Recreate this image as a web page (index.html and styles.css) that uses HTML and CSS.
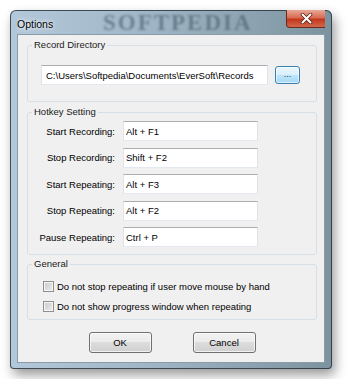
FILE: index.html
```html
<!DOCTYPE html>
<html lang="en">
<head>
    <meta charset="UTF-8">
    <title>Options</title>
    <link rel="stylesheet" href="styles.css">
</head>
<body>

  <div class="window">
    <div class="titlebar">
      <span class="title">Options</span>
      <span class="watermark">SOFTPEDIA</span>
      <span class="close">
        <svg width="13" height="11" viewBox="0 0 13 11">
          <path d="M2.5 1.5 L10.5 9.5 M10.5 1.5 L2.5 9.5" stroke="#5a2418" stroke-width="3.6" stroke-linecap="round"/>
          <path d="M2.5 1.5 L10.5 9.5 M10.5 1.5 L2.5 9.5" stroke="#ffffff" stroke-width="2" stroke-linecap="round"/>
        </svg>
      </span>
    </div>

    <div class="client">
      <fieldset class="group">
        <legend>Record Directory</legend>
        <div class="dir-body">
          <div class="textbox dir">C:\Users\Softpedia\Documents\EverSoft\Records</div>
          <button type="button" class="browse">...</button>
        </div>
      </fieldset>

      <fieldset class="group">
        <legend>Hotkey Setting</legend>
        <div class="hotkey-body">
          <label>Start Recording:</label>
          <div class="textbox">Alt + F1</div>
          <label>Stop Recording:</label>
          <div class="textbox">Shift + F2</div>
          <label>Start Repeating:</label>
          <div class="textbox">Alt + F3</div>
          <label>Stop Repeating:</label>
          <div class="textbox">Alt + F2</div>
          <label>Pause Repeating:</label>
          <div class="textbox">Ctrl + P</div>
        </div>
      </fieldset>

      <fieldset class="group">
        <legend>General</legend>
        <div class="general-body">
          <div class="check-row"><span class="check"></span>Do not stop repeating if user move mouse by hand</div>
          <div class="check-row"><span class="check"></span>Do not show progress window when repeating</div>
        </div>
      </fieldset>

      <div class="actions">
        <button type="button" class="btn">OK</button>
        <button type="button" class="btn">Cancel</button>
      </div>
    </div>
  </div>

</body>
</html>
```

FILE: styles.css
```css
body {
    margin: 0;
    padding: 10px;
    background: #ffffff;
    font-family: "Liberation Sans", Arial, sans-serif;
    font-size: 9.5px;
    color: #000000;
}

.window {
    width: 322px;
    height: 359px;
    box-sizing: border-box;
    padding: 0 7px 6px;
    display: flex;
    flex-direction: column;
    border-radius: 6px 6px 4px 4px;
    background: linear-gradient(to right, #b3c8da 0%, #9fb4c4 45%, #7c939f 100%);
    box-shadow: inset 0 0 0 1px rgba(35, 45, 55, 0.8), 3px 6px 12px rgba(0, 0, 0, 0.4);
}

.titlebar {
    height: 24px;
    position: relative;
    display: flex;
    align-items: flex-start;
    overflow: hidden;
}

.title {
    padding-top: 8px;
    font-size: 10.5px;
    line-height: 13px;
    text-shadow: 0 0 6px #ffffff, 0 0 3px #ffffff;
}

.watermark {
    position: absolute;
    left: 86px;
    top: 2px;
    font-family: "Liberation Serif", serif;
    font-weight: bold;
    font-size: 23px;
    line-height: 22px;
    letter-spacing: 2px;
    color: #3f5668;
    opacity: 0.55;
    filter: blur(1px);
}

.close {
    position: relative;
    margin-left: auto;
    margin-right: -2px;
    width: 41px;
    height: 18px;
    box-sizing: border-box;
    display: flex;
    align-items: center;
    justify-content: center;
    border: 1px solid #6b2a1e;
    border-top: none;
    border-radius: 0 0 4px 4px;
    background: linear-gradient(to bottom, #e9a898 0%, #d86c53 45%, #c3371c 55%, #d3684a 100%);
}

.client {
    flex: 1;
    box-sizing: border-box;
    padding: 4px 7px 0 9px;
    background: #f0f0f0;
    border: 1px solid #8b9ca8;
}

.group {
    margin: 0 0 4px;
    padding: 0;
    min-width: 0;
    border: 1px solid #d5dfe5;
    border-radius: 3px;
}

.group + .group + .group {
    margin-top: -1px;
}

legend {
    margin-left: 4px;
    padding: 0 2px;
    line-height: 12px;
    color: #1a1a1a;
}

.dir-body {
    display: flex;
    align-items: center;
    gap: 7px;
    padding: 14px 16px 16px 13px;
}

.textbox {
    height: 20px;
    box-sizing: border-box;
    padding: 0 2px;
    display: flex;
    align-items: center;
    background: #ffffff;
    border: 1px solid #e2e3ea;
    border-top-color: #abadb3;
    border-bottom-color: #e3e9ef;
    white-space: nowrap;
}

.textbox.dir {
    width: 227px;
    padding-left: 4px;
}

.browse {
    width: 25px;
    height: 18px;
    padding: 0 0 3px;
    font-family: inherit;
    font-size: 9px;
    color: #333333;
    border: 1px solid #3c7fb1;
    border-radius: 3px;
    background: linear-gradient(to bottom, #eaf6fd 0%, #d9f0fc 50%, #bee6fd 50%, #a7d9f5 100%);
    box-shadow: inset 0 0 0 1px rgba(255, 255, 255, 0.6);
}

.hotkey-body {
    display: grid;
    grid-template-columns: 87px 135px;
    column-gap: 8px;
    row-gap: 6.5px;
    align-items: center;
    padding: 3px 0 7px;
}

.hotkey-body label {
    text-align: right;
}

.general-body {
    padding: 6px 0 3px 15px;
}

.check-row {
    height: 20px;
    display: flex;
    align-items: center;
    gap: 3px;
}

.check {
    width: 11px;
    height: 11px;
    box-sizing: border-box;
    border: 1px solid #8e8f8f;
    background: linear-gradient(135deg, #c9c9c9 0%, #ededed 100%);
    box-shadow: inset 0 0 0 1px #f6f6f6;
}

.actions {
    display: flex;
    justify-content: center;
    gap: 41px;
    margin-top: 12px;
}

.btn {
    width: 63px;
    height: 21px;
    padding: 0;
    font-family: inherit;
    font-size: 9.5px;
    color: #000000;
    border: 1px solid #707070;
    border-radius: 3px;
    background: linear-gradient(to bottom, #f2f2f2 0%, #ebebeb 50%, #dddddd 50%, #cfcfcf 100%);
    box-shadow: inset 0 0 0 1px rgba(255, 255, 255, 0.7);
}
```
